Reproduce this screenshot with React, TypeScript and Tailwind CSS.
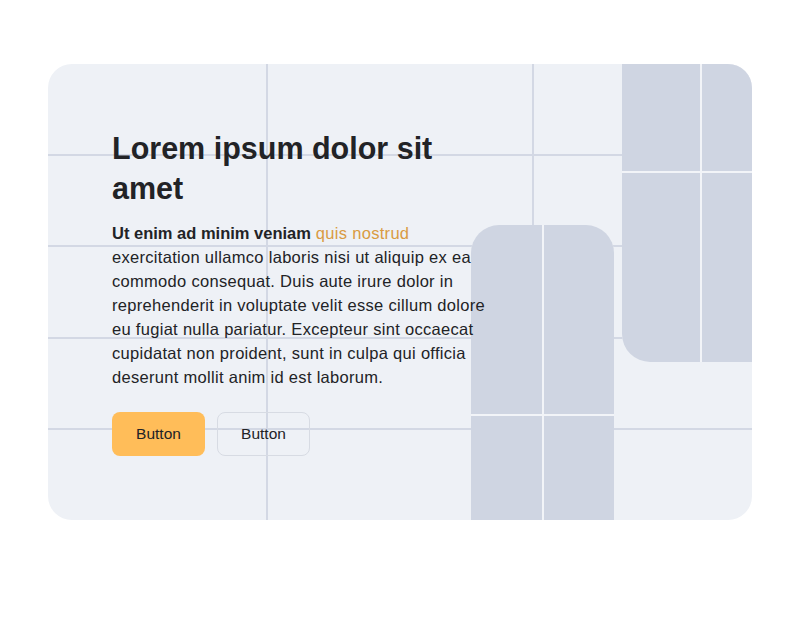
import React from "react";

export default function App() {
  return (
    <div className="min-h-[624px] w-[800px] bg-white px-12 pt-16" style={{ fontFamily: '"Liberation Sans", Arial, sans-serif' }}>
      <div className="relative h-[456px] w-[704px] overflow-hidden rounded-[24px] bg-[#eef1f6]">
        {/* grid lines */}
        <div className="pointer-events-none absolute inset-0">
          <div className="absolute top-0 bottom-0 left-[218px] w-[2px] bg-[#d3d8e4]" />
          <div className="absolute top-0 bottom-0 left-[484px] w-[2px] bg-[#d3d8e4]" />
          <div className="absolute left-0 right-0 top-[90px] h-[2px] bg-[#d3d8e4]" />
          <div className="absolute left-0 right-0 top-[181px] h-[2px] bg-[#d3d8e4]" />
          <div className="absolute left-0 right-0 top-[273px] h-[2px] bg-[#d3d8e4]" />
          <div className="absolute left-0 right-0 top-[364px] h-[2px] bg-[#d3d8e4]" />
        </div>

        {/* lower decorative shape */}
        <div className="absolute left-[423px] top-[161px] bottom-0 grid w-[143px] grid-cols-[71px_70px] grid-rows-[189px_1fr] gap-[2px] overflow-hidden rounded-t-[28px] bg-[#f2f4f8]">
          <div className="bg-[#cfd5e2]" />
          <div className="bg-[#cfd5e2]" />
          <div className="bg-[#cfd5e2]" />
          <div className="bg-[#cfd5e2]" />
        </div>

        {/* upper decorative shape */}
        <div className="absolute left-[574px] top-0 grid h-[298px] w-[140px] grid-cols-[78px_1fr] grid-rows-[107px_1fr] gap-[2px] overflow-hidden rounded-bl-[28px] bg-[#f2f4f8]">
          <div className="bg-[#cfd5e2]" />
          <div className="bg-[#cfd5e2]" />
          <div className="bg-[#cfd5e2]" />
          <div className="bg-[#cfd5e2]" />
        </div>

        {/* content */}
        <div className="relative flex w-[460px] flex-col pl-16 pt-16">
          <h1 className="text-[30.5px] font-bold leading-[40px] text-[#222326]">
            Lorem ipsum dolor sit
            <br />
            amet
          </h1>
          <p className="mt-[13px] whitespace-nowrap text-[16.5px] leading-[24px] tracking-[0.3px] text-[#222326]">
            <span className="font-bold tracking-normal">Ut enim ad minim veniam</span>{" "}
            <span className="text-[#d99b42]">quis nostrud</span>
            <br />
            exercitation ullamco laboris nisi ut aliquip ex ea
            <br />
            commodo consequat. Duis aute irure dolor in
            <br />
            reprehenderit in voluptate velit esse cillum dolore
            <br />
            eu fugiat nulla pariatur. Excepteur sint occaecat
            <br />
            cupidatat non proident, sunt in culpa qui officia
            <br />
            deserunt mollit anim id est laborum.
          </p>
          <div className="mt-[23px] flex gap-3">
            <button className="h-[44px] w-[93px] rounded-[8px] bg-[#ffbd59] text-[15.5px] text-[#222326]">Button</button>
            <button className="h-[44px] w-[93px] rounded-[8px] border border-[#d7dbe3] text-[15.5px] text-[#222326]">
              Button
            </button>
          </div>
        </div>
      </div>
    </div>
  );
}
